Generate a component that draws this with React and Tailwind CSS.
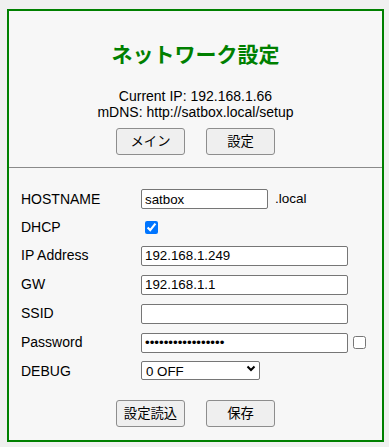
const font = { fontFamily: '"Liberation Sans", Arial, "Noto Sans CJK JP", sans-serif' };

function Btn({ children }) {
  return (
    <button
      type="button"
      className="w-[69px] h-[27px] border border-[#8d8d8d] rounded-[3px] bg-[#efefef] text-[13.33px] leading-none text-black"
    >
      {children}
    </button>
  );
}

function Row({ label, children, tall }) {
  return (
    <div className={`flex items-center ${tall ? 'h-[29px]' : 'h-[28px]'}`}>
      <div className="w-[120px] text-[14px] text-black">{label}</div>
      <div className="flex items-center">{children}</div>
    </div>
  );
}

const field =
  'h-[20px] border border-[#767676] rounded-[2px] bg-white px-[3px] text-[13.33px] text-black outline-none';

export default function App() {
  return (
    <div className="min-h-screen bg-[#f0f0f0] pt-[9px] pl-[7px]" style={font}>
      <div className="w-[377px] border-2 border-[#008000] bg-[#f7f7f7]">
        <div className="pt-[29px] text-center">
          <h1 className="text-[21px] leading-[30px] font-bold text-[#008000]">ネットワーク設定</h1>
          <div className="mt-[18px] text-[14px] leading-[16px] text-black">
            <div>Current IP: 192.168.1.66</div>
            <div>mDNS: http://satbox.local/setup</div>
          </div>
          <div className="mt-[8px] flex justify-center gap-[21px]">
            <Btn>メイン</Btn>
            <Btn>設定</Btn>
          </div>
        </div>

        <div className="mt-[12px] border-t border-[#8a8a8a]" />

        <div className="pt-[17px] pl-[12px]">
          <Row label="HOSTNAME">
            <input className={`${field} w-[127px]`} defaultValue="satbox" />
            <span className="ml-[7px] text-[13.5px] text-black">.local</span>
          </Row>
          <Row label="DHCP">
            <input type="checkbox" defaultChecked className="ml-[4px] w-[13px] h-[13px]" />
          </Row>
          <Row label="IP Address" tall>
            <input className={`${field} w-[207px]`} defaultValue="192.168.1.249" />
          </Row>
          <Row label="GW" tall>
            <input className={`${field} w-[207px]`} defaultValue="192.168.1.1" />
          </Row>
          <Row label="SSID" tall>
            <input className={`${field} w-[207px]`} defaultValue="" />
          </Row>
          <Row label="Password" tall>
            <input type="password" className={`${field} w-[207px]`} defaultValue="abcdefghijklmnopq" />
            <input type="checkbox" className="ml-[5px] w-[13px] h-[13px]" />
          </Row>
          <Row label="DEBUG">
            <div className="relative">
              <select
                className="appearance-none w-[119px] h-[19px] border border-[#767676] rounded-[2px] bg-white pl-[4px] text-[13.33px] text-black outline-none"
                defaultValue="0"
              >
                <option value="0">0 OFF</option>
                <option value="1">1 ON</option>
              </select>
              <svg
                className="absolute right-[4px] top-[6px] pointer-events-none"
                width="10"
                height="7"
                viewBox="0 0 10 7"
              >
                <path d="M1.5 1.5 L5 5 L8.5 1.5" fill="none" stroke="#000" strokeWidth="2" />
              </svg>
            </div>
          </Row>
        </div>

        <div className="mt-[15px] pb-[13px] flex justify-center gap-[21px]">
          <Btn>設定読込</Btn>
          <Btn>保存</Btn>
        </div>
      </div>
    </div>
  );
}
